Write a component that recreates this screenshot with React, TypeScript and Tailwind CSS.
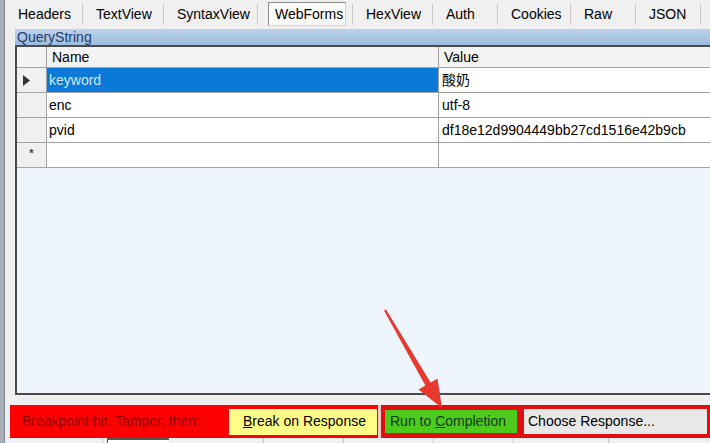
const tabs: { label: string; width: number; selected?: boolean }[] = [
  { label: "Headers", width: 77 },
  { label: "TextView", width: 80 },
  { label: "SyntaxView", width: 93 },
  { label: "WebForms", width: 94, selected: true },
  { label: "HexView", width: 79 },
  { label: "Auth", width: 64 },
  { label: "Cookies", width: 72 },
  { label: "Raw", width: 64 },
  { label: "JSON", width: 64 },
];

const rows = [
  { name: "keyword", value: "酸奶", selected: true },
  { name: "enc", value: "utf-8" },
  { name: "pvid", value: "df18e12d9904449bb27cd1516e42b9cb" },
];

function Arrow() {
  return (
    <svg
      className="pointer-events-none absolute left-0 top-0"
      width="710"
      height="443"
      viewBox="0 0 710 443"
    >
      <polygon
        points="384,310.5 425.4,385.5 418.5,389.5 442,408 437.5,378.5 430.6,382.5 386,309.5"
        fill="#e8392f"
      />
    </svg>
  );
}

export default function App() {
  return (
    <div className="relative h-[443px] w-[710px] overflow-hidden bg-[#f0f0f0] font-['Liberation_Sans',Arial,sans-serif] text-[14px] text-black">
      <div className="flex h-full">
        <div className="w-[5px] shrink-0 border-r border-[#7f8790] bg-[#a7afb8]" />
        <div className="flex min-w-0 flex-1 flex-col">
          {/* tab strip */}
          <div className="flex h-[28px] shrink-0 items-center">
            {tabs.map((tab) => (
              <div key={tab.label} className="flex h-full items-center">
                <div className="flex h-full items-center" style={{ width: tab.width }}>
                  {tab.selected ? (
                    <div className="ml-[10px] flex h-[24px] w-[78px] items-center border border-[#8c8c8c] border-b-[#d0d0d0] border-r-[#d0d0d0] bg-[#fbfbfb] pl-[6px]">
                      {tab.label}
                    </div>
                  ) : (
                    <span className="pl-[13px]">{tab.label}</span>
                  )}
                </div>
                <div className="h-[21px] w-px bg-[#c6c6c6]" />
              </div>
            ))}
          </div>

          <div className="ml-[10px] flex flex-1 flex-col">
            {/* QueryString caption */}
            <div className="mt-px h-[16px] overflow-hidden bg-gradient-to-b from-[#bcd2ea] to-[#9dbcdc] pl-[2px] leading-[17px] text-[#1e3d70]">
              QueryString
            </div>

            {/* grid */}
            <div className="flex h-[350px] flex-col border-b-2 border-l-2 border-t-2 border-[#4b4b4b] bg-[#eef5fd]">
              <div className="flex h-[21px] shrink-0 border-b border-[#a3a3a3] bg-[#f3f3f3]">
                <div className="w-[30px] border-r border-[#a3a3a3]" />
                <div className="w-[392px] border-r border-[#a3a3a3] pl-[5px] leading-[21px]">Name</div>
                <div className="flex-1 pl-[5px] leading-[21px]">Value</div>
              </div>
              {rows.map((row) => (
                <div key={row.name} className="flex h-[25px] shrink-0 border-b border-[#a3a3a3]">
                  <div className="flex w-[30px] items-center border-r border-[#a3a3a3] bg-[#f0f0f0] pl-[6px]">
                    {row.selected ? (
                      <svg width="7" height="11" viewBox="0 0 7 11">
                        <polygon points="0,0 7,5.5 0,11" fill="#333" />
                      </svg>
                    ) : null}
                  </div>
                  <div
                    className={
                      row.selected
                        ? "w-[392px] border-r border-[#a3a3a3] bg-[#0a79d8] pl-[2px] leading-[24px] text-[#d2e8ff]"
                        : "w-[392px] border-r border-[#a3a3a3] bg-white pl-[2px] leading-[24px]"
                    }
                  >
                    {row.name}
                  </div>
                  <div className="flex-1 whitespace-nowrap bg-white pl-[3px] leading-[24px] font-['Liberation_Sans','Noto_Sans_CJK_SC',sans-serif]">
                    {row.value}
                  </div>
                </div>
              ))}
              <div className="flex h-[25px] shrink-0 border-b border-[#a3a3a3]">
                <div className="flex w-[30px] items-start justify-center border-r border-[#a3a3a3] bg-[#f0f0f0] pt-[5px] text-[11px] font-bold leading-none text-[#444]">
                  *
                </div>
                <div className="w-[392px] border-r border-[#a3a3a3] bg-white" />
                <div className="flex-1 bg-white" />
              </div>
            </div>
          </div>

          {/* breakpoint bar */}
          <div className="ml-[5px] mt-[10px] flex h-[33px] shrink-0 items-center bg-[#ff0000]">
            <span className="ml-[12px] w-[207px] text-[#8f0000]">Breakpoint hit. Tamper, then:</span>
            <div className="flex h-[26px] w-[148px] items-center bg-[#ffff88] pl-[14px]">
              <span>
                <span className="underline">B</span>reak on Response
              </span>
            </div>
            <div className="ml-px h-full w-[3px] bg-[#f2c8c8]" />
            <div className="flex h-[31px] w-[140px] items-center border-[3px] border-[#e01010] bg-[#e01010] p-[1px]">
              <div className="flex h-full w-full items-center bg-[#4ccb1c] pl-[5px] text-[#123812]">
                <span>
                  Run to <span className="underline">C</span>ompletion
                </span>
              </div>
            </div>
            <div className="flex h-[31px] flex-1 items-center border-[3px] border-[#e01010] bg-[#e8e8e8] pl-[4px]">
              Choose Response...
            </div>
          </div>

          {/* bottom strip */}
          <div className="flex h-[6px] flex-1 items-start">
            <div className="h-full w-[98px] border-r border-[#c6c6c6]" />
            <div className="ml-[4px] h-full w-[62px] border-l border-t-2 border-[#555] bg-white" />
            <div className="h-full w-[95px] border-r border-[#c6c6c6]" />
            <div className="h-full w-[80px] border-r border-[#c6c6c6]" />
            <div className="h-full w-[90px] border-r border-[#c6c6c6]" />
            <div className="h-full w-[80px] border-r border-[#c6c6c6]" />
            <div className="h-full w-[95px] border-r border-[#c6c6c6]" />
          </div>
        </div>
      </div>
      <Arrow />
    </div>
  );
}
